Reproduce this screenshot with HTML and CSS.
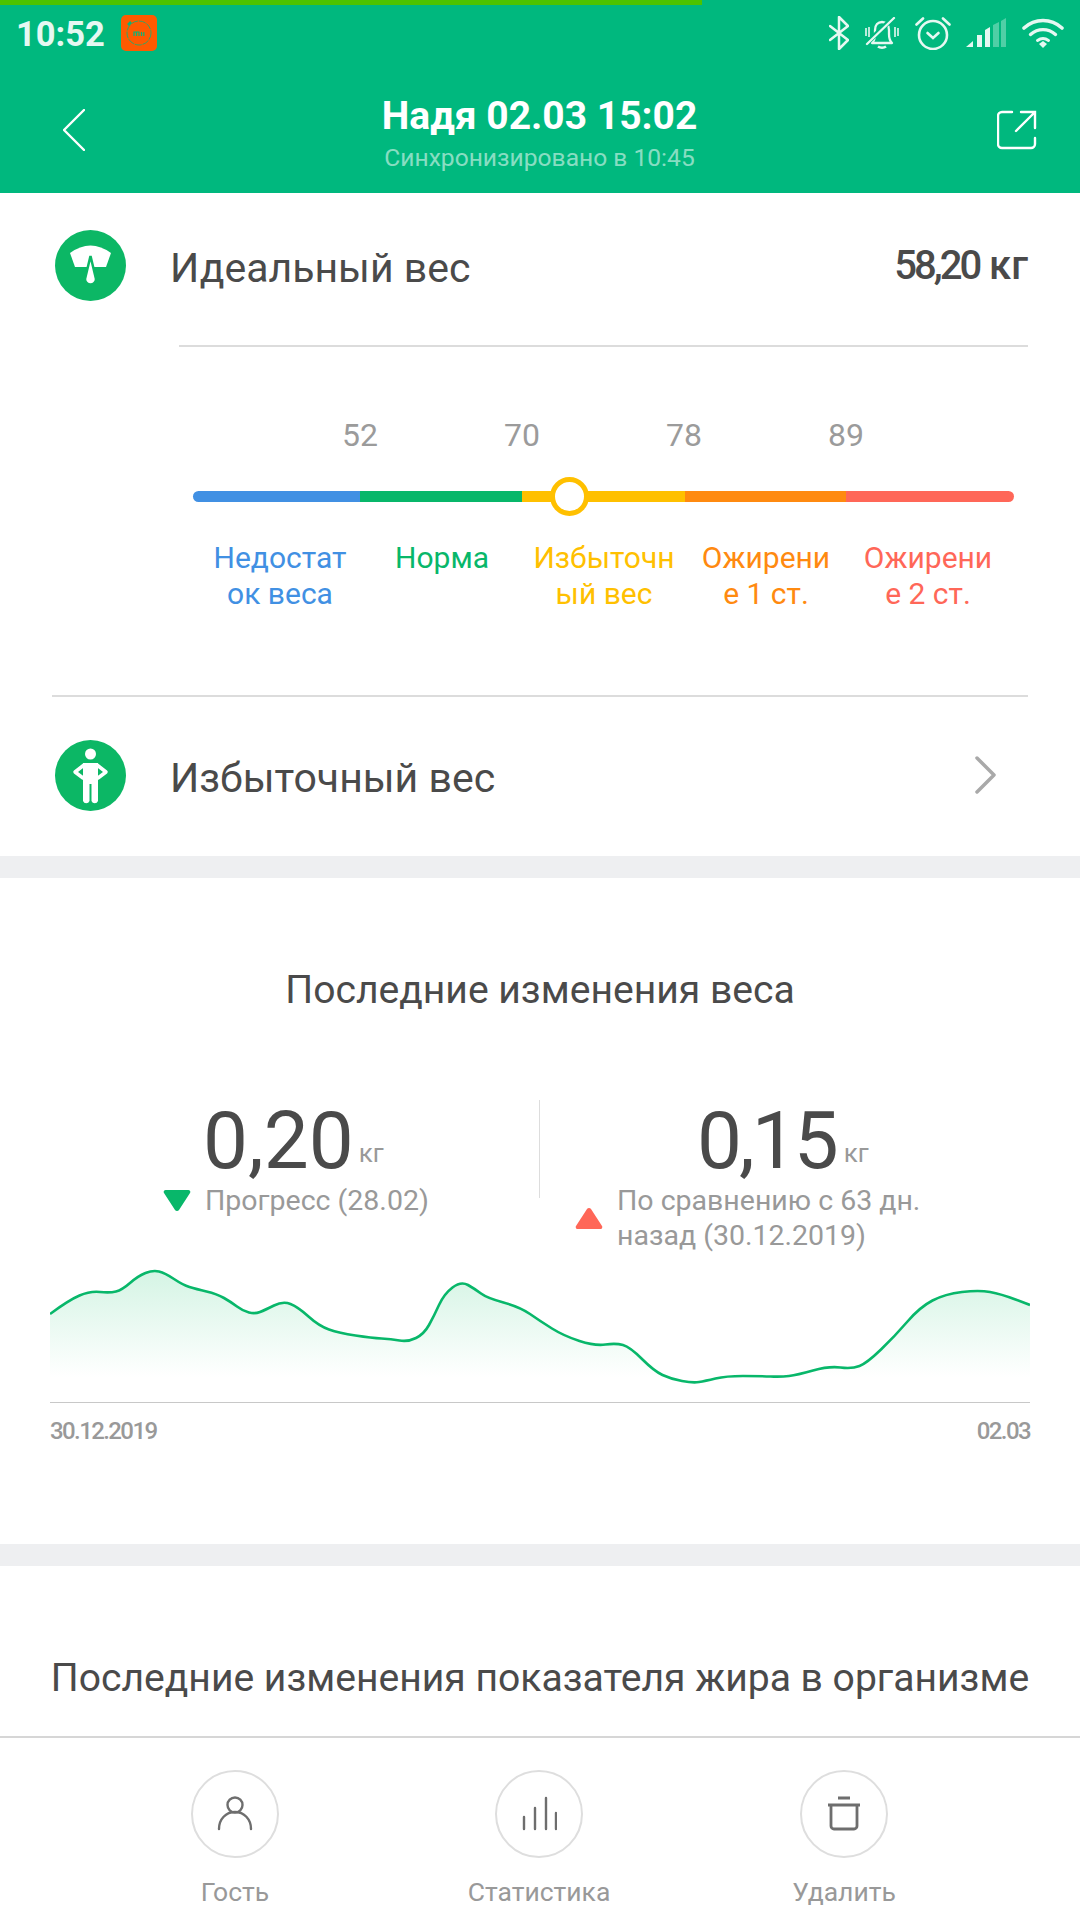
FILE: index.html
```html
<!DOCTYPE html>
<html lang="ru">
<head>
<meta charset="utf-8">
<title>Надя 02.03 15:02</title>
<link rel="stylesheet" href="styles.css">
</head>
<body>
<div class="screen">
  <header class="header">
    <div class="progress"></div>
    <div class="status">
      <span class="time">10:52</span>
      <svg class="mi-icon" viewBox="0 0 36 36">
        <rect width="36" height="36" rx="5" fill="#ff5a00"/>
        <circle cx="18" cy="18" r="12" fill="none" stroke="#00b87e" stroke-width=".8" stroke-dasharray="7 1"/>
        <path d="M7 10l3-3" stroke="#00b87e" stroke-width="2.500"/>
        <path d="M13 21v-4h5v4M15.500 17v4M20.500 17v4M22.800 17v4" fill="none" stroke="#00b87e" stroke-width="1.200"/>
      </svg>
      <div class="status-icons">
        <svg class="si-bt" viewBox="0 0 20 34"><path d="M1 10l18 14-9 9V1l9 9L1 24" fill="none" stroke="#e6f8f2" stroke-width="2.500" stroke-linejoin="round" stroke-linecap="round"/></svg>
        <svg class="si-bell" viewBox="0 0 34 32">
          <path d="M7 26c2-2 3-4 3-9V13c0-5 3-8 7-8s7 3 7 8v4c0 5 1 7 3 9z" fill="none" stroke="#e6f8f2" stroke-width="2.300" stroke-linejoin="round"/>
          <path d="M13 29.500c2 1.500 6 1.500 8 0" fill="none" stroke="#e6f8f2" stroke-width="2.500"/>
          <path d="M2 26L28 1" stroke="#00b87e" stroke-width="5"/>
          <path d="M2 27L29 1" stroke="#e6f8f2" stroke-width="2.300" stroke-linecap="round"/>
          <path d="M1 11v8M4 10v10M30 10v10M33 11v8" stroke="#e6f8f2" stroke-width="1.600"/>
        </svg>
        <svg class="si-alarm" viewBox="0 0 36 34">
          <circle cx="18" cy="19" r="14" fill="none" stroke="#e6f8f2" stroke-width="2.600"/>
          <path d="M1.500 8.500L8 2.500M34.500 8.500L28 2.500" stroke="#e6f8f2" stroke-width="2.600" stroke-linecap="round"/>
          <path d="M12.500 17l5.500 5 5.500-5" fill="none" stroke="#e6f8f2" stroke-width="2.600" stroke-linecap="round"/>
        </svg>
        <svg class="si-signal" viewBox="0 0 40 30">
          <path d="M0 29l7-6v6z" fill="#e6f8f2"/>
          <rect x="11" y="17" width="5" height="12" fill="#e6f8f2"/>
          <path d="M19 12l5-3v20h-5z" fill="#e6f8f2"/>
          <path d="M27 7l6-3v25h-6z" fill="#e6f8f2" opacity=".35"/>
          <path d="M35 3l5-3v29h-5z" fill="#e6f8f2" opacity=".35"/>
        </svg>
        <svg class="si-wifi" viewBox="0 0 42 30">
          <path d="M2 10c11-10 27-10 38 0" fill="none" stroke="#e6f8f2" stroke-width="3.600" stroke-linecap="round"/>
          <path d="M8.500 16.500c7.500-6.500 17.500-6.500 25 0" fill="none" stroke="#e6f8f2" stroke-width="3.400" stroke-linecap="round"/>
          <path d="M15.500 22.500c3.500-2.500 7.500-2.500 11 0" fill="none" stroke="#e6f8f2" stroke-width="3" stroke-linecap="round"/>
          <path d="M21 30l-4-4 4-3 4 3z" fill="#e6f8f2"/>
        </svg>
      </div>
    </div>
    <div class="titlebar">
      <svg class="back" viewBox="0 0 22 42"><path d="M21 1L1 21l20 20" fill="none" stroke="#fff" stroke-width="2.400" stroke-linecap="round" stroke-linejoin="round"/></svg>
      <div class="title-block">
        <div class="title">Надя 02.03 15:02</div>
        <div class="subtitle">Синхронизировано в 10:45</div>
      </div>
      <svg class="share" viewBox="0 0 40 40">
        <path d="M15 2H5a4 4 0 0 0-4 4v28a4 4 0 0 0 4 4h29a4 4 0 0 0 4-4v-6" fill="none" stroke="#fff" stroke-width="2.400" stroke-linecap="round"/>
        <path d="M19 21L38 2M24 2h14v16" fill="none" stroke="#fff" stroke-width="2.400" stroke-linecap="round"/>
      </svg>
    </div>
  </header>

  <section class="card-top">
    <div class="row row-ideal">
      <svg class="round-icon" viewBox="0 0 71 71">
        <circle cx="35.500" cy="35.500" r="35.500" fill="#0cb765"/>
        <path d="M15 23Q35.500 8 56 23L51 37H20z" fill="#fff"/>
        <path d="M35.500 26L41 49a5.500 5.500 0 1 1-11 0z" fill="#fff" stroke="#0cb765" stroke-width="2.500"/>
      </svg>
      <span class="row-label">Идеальный вес</span>
      <span class="weight"><span class="weight-num">58,20</span> кг</span>
    </div>
    <div class="range">
      <div class="range-nums"><span>52</span><span>70</span><span>78</span><span>89</span></div>
      <div class="range-bar">
        <span class="seg seg-1"></span><span class="seg seg-2"></span><span class="seg seg-3"></span><span class="seg seg-4"></span><span class="seg seg-5"></span>
        <span class="marker"></span>
      </div>
      <div class="range-labels">
        <span class="c-blue">Недостат<br>ок веса</span>
        <span class="c-green">Норма</span>
        <span class="c-yellow">Избыточн<br>ый вес</span>
        <span class="c-orange">Ожирени<br>е 1 ст.</span>
        <span class="c-red">Ожирени<br>е 2 ст.</span>
      </div>
    </div>
    <div class="row row-status">
      <svg class="round-icon" viewBox="0 0 71 71">
        <circle cx="35.500" cy="35.500" r="35.500" fill="#0cb765"/>
        <circle cx="35.500" cy="14" r="5.500" fill="#fff"/>
        <path d="M28 23h15v38a3.500 3.500 0 0 1-6.500 0V44h-2v17a3.500 3.500 0 0 1-6.500 0z" fill="#fff"/>
        <path d="M29 25l-9 7 8 6M42 25l9 7-8 6" fill="none" stroke="#fff" stroke-width="3.500" stroke-linecap="round" stroke-linejoin="round"/>
      </svg>
      <span class="row-label">Избыточный вес</span>
      <svg class="chevron" viewBox="0 0 22 38"><path d="M2 2l17 17L2 36" fill="none" stroke="#a9a9a9" stroke-width="3.500" stroke-linecap="round" stroke-linejoin="round"/></svg>
    </div>
  </section>

  <div class="band"></div>

  <section class="changes">
    <h2 class="heading heading-weight">Последние изменения веса</h2>
    <div class="stats">
      <div class="stat stat-left">
        <div class="stat-value"><span class="stat-num">0,20</span><span class="stat-unit">кг</span></div>
        <div class="stat-note">
          <svg class="tri" viewBox="0 0 28 23"><path d="M3 1h22a2 2 0 0 1 2 3L16 21a2.500 2.500 0 0 1-4 0L1 4a2 2 0 0 1 2-3z" fill="#08b76a"/></svg>
          <span>Прогресс (28.02)</span>
        </div>
      </div>
      <div class="stat stat-right">
        <div class="stat-value"><span class="stat-num">0,15</span><span class="stat-unit">кг</span></div>
        <div class="stat-note">
          <svg class="tri" viewBox="0 0 28 23"><path d="M3 22h22a2 2 0 0 0 2-3L16 2a2.500 2.500 0 0 0-4 0L1 19a2 2 0 0 0 2 3z" fill="#ff6758"/></svg>
          <span>По сравнению с 63 дн.<br>назад (30.12.2019)</span>
        </div>
      </div>
    </div>
    <svg class="chart" viewBox="50 1260 980 143">
      <defs>
        <linearGradient id="area" gradientUnits="userSpaceOnUse" x1="0" y1="1271" x2="0" y2="1378">
          <stop offset="0" stop-color="#d4f4e4"/>
          <stop offset="1" stop-color="#ffffff"/>
        </linearGradient>
      </defs>
      <path fill="url(#area)" d="M50 1315Q69 1301 79.500 1296.500Q90 1292 100 1293Q110 1294 116 1292.500Q122 1291 130 1284Q138 1277 145.500 1274Q153 1271 159 1272.500Q165 1274 174 1280Q183 1286 189.500 1288Q196 1290 206.500 1292.500Q217 1295 224 1299Q231 1303 237 1307.500Q243 1312 249 1313.500Q255 1315 260 1313Q265 1311 274 1306.500Q283 1302 290.500 1305Q298 1308 308.500 1317.500Q319 1327 329 1330.500Q339 1334 355.500 1336.500Q372 1339 381.500 1339.500Q391 1340 399.500 1341.500Q408 1343 416 1339Q424 1335 429 1326Q434 1317 439 1306Q444 1295 452.500 1288.500Q461 1282 468 1286Q475 1290 481 1294.500Q487 1299 503.500 1303.500Q520 1308 530 1315Q540 1322 552 1329.500Q564 1337 579.500 1342Q595 1347 605.500 1345.500Q616 1344 623 1346Q630 1348 642 1360Q654 1372 662.500 1376Q671 1380 682 1382Q693 1384 699 1383Q705 1382 715.500 1379.500Q726 1377 743 1377Q760 1377 770.500 1377.500Q781 1378 789 1377Q797 1376 813 1371.500Q829 1367 840.500 1368.500Q852 1370 859.500 1367Q867 1364 881 1350.500Q895 1337 907.500 1322.500Q920 1308 932.500 1301.500Q945 1295 962 1293Q979 1291 990 1293Q1001 1295 1015.500 1300.500L1030 1306V1400H50z"/>
      <path fill="none" stroke="#08b76a" stroke-width="2.600" d="M50 1315Q69 1301 79.500 1296.500Q90 1292 100 1293Q110 1294 116 1292.500Q122 1291 130 1284Q138 1277 145.500 1274Q153 1271 159 1272.500Q165 1274 174 1280Q183 1286 189.500 1288Q196 1290 206.500 1292.500Q217 1295 224 1299Q231 1303 237 1307.500Q243 1312 249 1313.500Q255 1315 260 1313Q265 1311 274 1306.500Q283 1302 290.500 1305Q298 1308 308.500 1317.500Q319 1327 329 1330.500Q339 1334 355.500 1336.500Q372 1339 381.500 1339.500Q391 1340 399.500 1341.500Q408 1343 416 1339Q424 1335 429 1326Q434 1317 439 1306Q444 1295 452.500 1288.500Q461 1282 468 1286Q475 1290 481 1294.500Q487 1299 503.500 1303.500Q520 1308 530 1315Q540 1322 552 1329.500Q564 1337 579.500 1342Q595 1347 605.500 1345.500Q616 1344 623 1346Q630 1348 642 1360Q654 1372 662.500 1376Q671 1380 682 1382Q693 1384 699 1383Q705 1382 715.500 1379.500Q726 1377 743 1377Q760 1377 770.500 1377.500Q781 1378 789 1377Q797 1376 813 1371.500Q829 1367 840.500 1368.500Q852 1370 859.500 1367Q867 1364 881 1350.500Q895 1337 907.500 1322.500Q920 1308 932.500 1301.500Q945 1295 962 1293Q979 1291 990 1293Q1001 1295 1015.500 1300.500L1030 1306"/>
    </svg>
    <div class="chart-axis"><span>30.12.2019</span><span>02.03</span></div>
  </section>

  <div class="band"></div>

  <section class="fat">
    <h2 class="heading">Последние изменения показателя жира в организме</h2>
  </section>

  <nav class="bottom">
    <div class="action action-guest">
      <span class="action-circle">
        <svg class="action-icon" viewBox="0 0 36 36"><ellipse cx="18" cy="9" rx="7.500" ry="7.500" fill="none" stroke="#6e6e6e" stroke-width="2.400"/><path d="M2 33c0-10 7-17 16-17s16 7 16 17" fill="none" stroke="#6e6e6e" stroke-width="2.400" stroke-linecap="round"/></svg>
      </span>
      <span class="action-label">Гость</span>
    </div>
    <div class="action action-stats">
      <span class="action-circle">
        <svg class="action-icon" viewBox="0 0 36 36"><path d="M3 33V21M14 33V12M25 33V2M35 33V17" fill="none" stroke="#6e6e6e" stroke-width="2.400" stroke-linecap="round"/></svg>
      </span>
      <span class="action-label">Статистика</span>
    </div>
    <div class="action action-del">
      <span class="action-circle">
        <svg class="action-icon" viewBox="0 0 36 36"><path d="M2 9h32M12 2h12" fill="none" stroke="#6e6e6e" stroke-width="2.800"/><path d="M5 9v21a3 3 0 0 0 3 3h20a3 3 0 0 0 3-3V9" fill="none" stroke="#6e6e6e" stroke-width="2.800"/></svg>
      </span>
      <span class="action-label">Удалить</span>
    </div>
  </nav>
</div>
</body>
</html>
```
FILE: styles.css
```css
* { box-sizing: border-box; }
html, body { margin: 0; padding: 0; background: #fff; }
body { font-family: Roboto, "Noto Sans", sans-serif; color: #4a4a4a; }
.screen { width: 1080px; height: 1920px; overflow: hidden; display: flex; flex-direction: column; background: #fff; }

/* header */
.header { height: 193px; background: #00b87e; flex: none; }
.progress { width: 702px; height: 5px; background: #4cc300; }
.status { height: 49px; padding: 10px 16px 0 16px; display: flex; align-items: flex-start; }
.time { font-size: 34.500px; font-weight: 700; line-height: 38px; color: #e6f8f2; width: 105px; }
.mi-icon { width: 36px; height: 36px; flex: none; }
.status-icons { margin-left: auto; display: flex; align-items: flex-start; }
.si-bt { width: 20px; height: 34px; margin-right: 16px; margin-top: 1px; }
.si-bell { width: 34px; height: 32px; margin-right: 16px; margin-top: 2px; }
.si-alarm { width: 36px; height: 34px; margin-right: 15px; margin-top: 1px; }
.si-signal { width: 40px; height: 30px; margin-right: 16px; margin-top: 3px; }
.si-wifi { width: 42px; height: 30px; margin-top: 3px; }
.titlebar { height: 139px; padding: 0 43px 0 63px; display: flex; align-items: flex-start; }
.back { width: 22px; height: 42px; flex: none; margin-top: 55px; }
.title-block { flex: 1; text-align: center; margin-top: 40px; padding-right: 3px; }
.title { font-size: 39px; font-weight: 700; line-height: 44px; color: #fff; }
.subtitle { font-size: 24.600px; line-height: 30px; color: rgba(255,255,255,.55); margin-top: 5px; }
.share { width: 40px; height: 40px; flex: none; margin-top: 56px; }

/* top card */
.card-top { height: 663px; flex: none; display: flex; flex-direction: column; }
.row { display: flex; align-items: center; }
.row-ideal { height: 152px; padding: 37px 52px 0 55px; align-items: flex-start; }
.round-icon { width: 71px; height: 71px; flex: none; margin-right: 44px; }
.row-label { font-size: 41px; line-height: 66px; padding-top: 5px; color: #4a4a4a; }
.weight { margin-left: auto; font-size: 40px; font-weight: 500; line-height: 72px; color: #4a4a4a; }
.weight-num { letter-spacing: -3px; }
.range { height: 352px; margin: 0 52px; border-bottom: 2px solid #dcdcdc; }
.range::before { content: ""; display: block; height: 2px; margin-left: 127px; background: #dcdcdc; }
.range-nums { display: flex; padding: 69px 0 0 227px; height: 144px; font-size: 32px; line-height: 38px; color: #9b9b9b; }
.range-nums span { width: 162px; text-align: center; }
.range-bar { display: flex; height: 11px; margin-left: 141px; width: 821px; position: relative; }
.seg { display: block; height: 11px; }
.seg-1 { width: 167px; background: #4190e3; border-radius: 6px 0 0 6px; }
.seg-2 { width: 162px; background: #08b76a; }
.seg-3 { width: 163px; background: #ffc000; }
.seg-4 { width: 161px; background: #ff8a10; }
.seg-5 { width: 168px; background: #ff6758; border-radius: 0 6px 6px 0; }
.marker { position: absolute; left: 357px; top: -14px; width: 39px; height: 39px; border-radius: 50%; background: #fff; border: 5px solid #ffc000; }
.range-labels { display: flex; margin-left: 147px; margin-top: 38px; font-size: 30px; line-height: 35.500px; }
.range-labels span { width: 162px; text-align: center; }
.c-blue { color: #4190e3; }
.c-green { color: #08b76a; }
.c-yellow { color: #ffc000; }
.c-orange { color: #ff8a10; }
.c-red { color: #ff6758; }
.row-status { height: 159px; padding: 0 83px 3px 55px; }
.chevron { width: 22px; height: 38px; margin-left: auto; }

.band { height: 22px; background: #eeeff1; flex: none; }

/* changes */
.changes { height: 666px; flex: none; padding: 0 50px; display: flex; flex-direction: column; }
.heading { margin: 0; font-size: 39.100px; font-weight: 400; line-height: 44px; color: #4a4a4a; text-align: center; white-space: nowrap; }
.heading-weight { margin-top: 90px; }
.stats { display: flex; height: 260px; margin-top: 88px; flex: none; }
.stat { width: 50%; height: 98px; }
.stat-left { border-right: 1px solid #ddd; padding-left: 153px; }
.stat-right { padding-left: 157px; }
.stat-value { height: 83px; line-height: 82px; white-space: nowrap; }
.stat-num { font-size: 80px; color: #4a4a4a; }
.stat-right .stat-num { letter-spacing: -3px; }
.stat-unit { font-size: 26px; color: #999; margin-left: 5px; vertical-align: 6px; }
.stat-right .stat-unit { margin-left: 8px; }
.stat-note { display: flex; align-items: center; font-size: 28.500px; line-height: 35px; color: #999; white-space: nowrap; }
.stat-left .stat-note { margin-left: -40px; }
.stat-right .stat-note { margin-left: -122px; }
.tri { width: 28px; height: 23px; flex: none; margin-right: 14px; }
.chart { display: block; width: 980px; height: 143px; flex: none; margin-top: -101px; }
.chart-axis { display: flex; justify-content: space-between; padding-top: 14px; border-top: 1px solid #c8c8c8; font-size: 24px; font-weight: 500; line-height: 28px; color: #999; letter-spacing: -1.600px; }

/* fat */
.fat { height: 170px; flex: none; padding: 90px 50px 0; }

/* bottom bar */
.bottom { height: 184px; flex: none; border-top: 2px solid #d6d6d6; background: #fff; padding: 32px 0 0 0; display: flex; }
.action { width: 304px; display: flex; flex-direction: column; align-items: center; }
.action-guest { margin-left: 83px; }
.action-del { margin-left: 1px; }
.action-circle { width: 88px; height: 88px; border-radius: 50%; border: 2px solid #dedede; display: flex; align-items: center; justify-content: center; }
.action-icon { width: 36px; height: 36px; }
.action-label { font-size: 26.500px; line-height: 30px; color: #999; margin-top: 19px; }
```
